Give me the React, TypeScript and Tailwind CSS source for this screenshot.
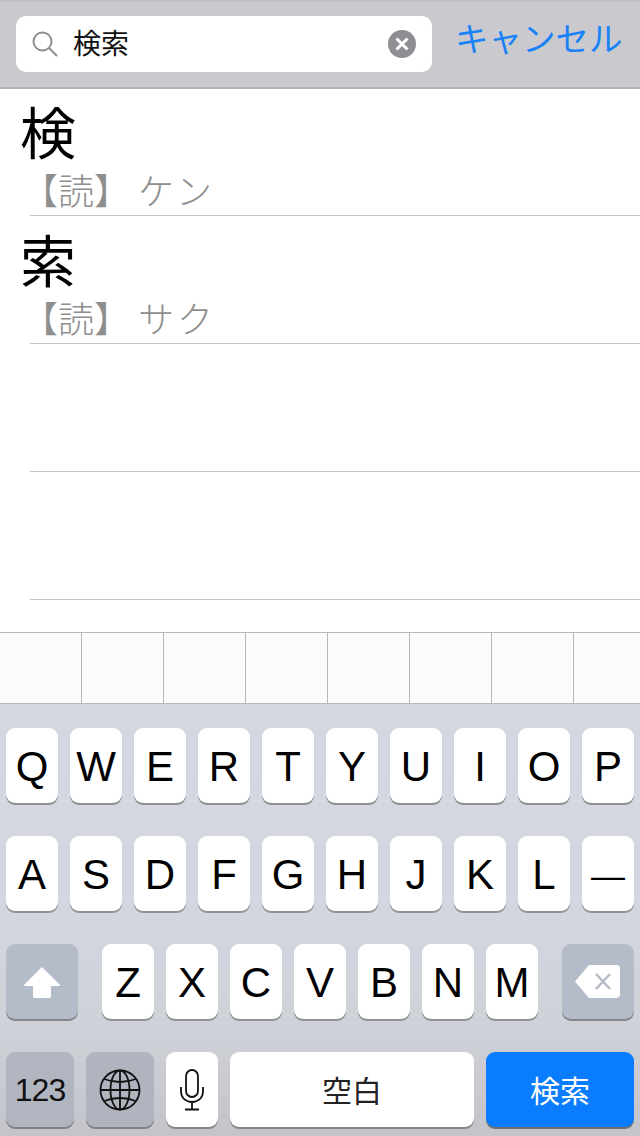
const row1 = ["Q", "W", "E", "R", "T", "Y", "U", "I", "O", "P"];
const row2 = ["A", "S", "D", "F", "G", "H", "J", "K", "L", "—"];
const row3 = ["Z", "X", "C", "V", "B", "N", "M"];

const entries = [
  { kanji: "検", reading: "ケン" },
  { kanji: "索", reading: "サク" },
  { kanji: "", reading: "" },
  { kanji: "", reading: "" },
];

const jp = "font-['Noto_Sans_CJK_JP',sans-serif]";

function Key({ label }: { label: string }) {
  return (
    <div
      className={`flex h-[75px] w-[52px] items-center justify-center rounded-[9px] bg-white pt-[3px] leading-none text-black shadow-[0_2px_0_#8e9095] ${
        label === "—" ? "text-[34px]" : "text-[42px]"
      }`}
    >
      {label}
    </div>
  );
}

function ShiftIcon() {
  return (
    <svg width="38" height="32" viewBox="0 0 38 32">
      <path d="M19 1 L37 19 Q37.500 20 36 20 L28 20 L28 30 Q28 32 26 32 L12 32 Q10 32 10 30 L10 20 L2 20 Q0.500 20 1 19 Z" fill="#fff" />
    </svg>
  );
}

function DeleteIcon() {
  return (
    <svg width="46" height="33" viewBox="0 0 46 33">
      <path d="M14 0 L41 0 Q45 0 45 4 L45 29 Q45 33 41 33 L14 33 L0 16.500 Z" fill="#fff" />
      <path d="M21 9 L35 24 M35 9 L21 24" stroke="#b4bac6" strokeWidth="2.500" fill="none" />
    </svg>
  );
}

function GlobeIcon() {
  return (
    <svg width="42" height="42" viewBox="0 0 42 42" fill="none" stroke="#111" strokeWidth="1.800">
      <circle cx="21" cy="21" r="19.500" />
      <ellipse cx="21" cy="21" rx="9.500" ry="19.500" />
      <path d="M21 1.500 V40.500 M1.500 21 H40.500" />
      <path d="M5 10 Q21 16 37 10 M5 32 Q21 26 37 32" />
    </svg>
  );
}

function MicIcon() {
  return (
    <svg width="24" height="42" viewBox="0 0 24 42" fill="none" stroke="#111" strokeWidth="1.800">
      <rect x="6" y="1" width="12" height="27" rx="6" />
      <path d="M1 18 V22 C1 29 6 33 12 33 C18 33 23 29 23 22 V18" />
      <path d="M12 33 V40 M5 40.500 H19" />
    </svg>
  );
}

export default function App() {
  return (
    <div className="flex h-[1136px] w-[640px] flex-col overflow-hidden bg-white font-['Liberation_Sans','Noto_Sans_CJK_JP',sans-serif]">
      {/* search bar */}
      <div className="flex h-[89px] shrink-0 items-start border-t-2 border-b-2 border-t-[#bdbdc2] border-b-[#b4b4b8] bg-[#c9c9ce] pt-[14px] pl-4">
        <div className="flex h-[56px] w-[416px] items-center rounded-[10px] bg-white pr-4 pl-4">
          <svg width="26" height="26" viewBox="0 0 26 26" fill="none" stroke="#8e8e93" strokeWidth="2">
            <circle cx="10.500" cy="10.500" r="9" />
            <path d="M17 17 L25 25" />
          </svg>
          <span className={`mb-1 ml-[15px] flex-1 text-[28px] leading-none text-[#111] ${jp}`}>検索</span>
          <div className="flex h-7 w-7 items-center justify-center rounded-full bg-[#8e8e93]">
            <svg width="14" height="14" viewBox="0 0 14 14" stroke="#fff" strokeWidth="3">
              <path d="M1.500 1.500 L12.500 12.500 M12.500 1.500 L1.500 12.500" />
            </svg>
          </div>
        </div>
        <span className={`mt-[1px] ml-[23px] text-[33.500px] leading-[40px] whitespace-nowrap text-[#1a82f7] ${jp}`}>キャンセル</span>
      </div>

      {/* results */}
      <div className="-mt-px flex-1">
        {entries.map((entry, i) => (
          <div key={i} className="h-[128px]">
            <div className="h-[127px] pl-5">
              <div className={`h-[76px] pt-[14px] text-[56px] leading-[56px] text-black ${jp}`}>{entry.kanji}</div>
              {entry.reading && (
                <div className={`ml-[2px] h-[50px] text-[36px] leading-[50px] font-light whitespace-pre text-[#8e8e8e] ${jp}`}>
                  【読】 <span className="tracking-[3px]">{entry.reading}</span>
                </div>
              )}
            </div>
            <div className="ml-[30px] h-px bg-[#c4c4c6]" />
          </div>
        ))}
      </div>

      {/* candidate bar */}
      <div className="flex h-[72px] shrink-0 border-t border-b border-[#b8b8ba] bg-[#fcfcfc]">
        {Array.from({ length: 8 }).map((_, i) => (
          <div key={i} className="h-full w-[82px] shrink-0 border-r border-[#b8b8ba]" />
        ))}
      </div>

      {/* keyboard */}
      <div className="flex h-[432px] shrink-0 flex-col gap-[33px] bg-[linear-gradient(180deg,#d5d8e1_0%,#d3d6df_50%,#cfd1d8_75%,#c3c4c9_100%)] px-[6px] pt-6">
        <div className="flex gap-3">
          {row1.map((k) => (
            <Key key={k} label={k} />
          ))}
        </div>
        <div className="flex gap-3">
          {row2.map((k) => (
            <Key key={k} label={k} />
          ))}
        </div>
        <div className="flex">
          <div className="mr-6 flex h-[75px] w-[72px] items-center justify-center rounded-[9px] bg-[#b5bcc9] shadow-[0_2px_0_#83868d]">
            <ShiftIcon />
          </div>
          <div className="flex gap-3">
            {row3.map((k) => (
              <Key key={k} label={k} />
            ))}
          </div>
          <div className="ml-6 flex h-[75px] w-[72px] items-center justify-center rounded-[9px] bg-[#b5bcc9] shadow-[0_2px_0_#83868d]">
            <DeleteIcon />
          </div>
        </div>
        <div className="flex gap-3">
          <div className="flex h-[75px] w-[68px] items-center justify-center rounded-[9px] bg-[#b1b5c0] text-[32px] tracking-[-1px] text-[#111] shadow-[0_2px_0_#7f8187]">
            123
          </div>
          <div className="flex h-[75px] w-[68px] items-center justify-center rounded-[9px] bg-[#b1b4bf] shadow-[0_2px_0_#7f8187]">
            <GlobeIcon />
          </div>
          <div className="flex h-[75px] w-[52px] items-center justify-center rounded-[9px] bg-white shadow-[0_2px_0_#85868a]">
            <MicIcon />
          </div>
          <div className={`flex h-[75px] w-[244px] items-center justify-center rounded-[9px] bg-white text-[30px] text-[#222] shadow-[0_2px_0_#85868a] ${jp}`}>
            空白
          </div>
          <div className={`flex h-[75px] w-[148px] items-center justify-center rounded-[9px] bg-[#0a7cff] text-[30px] text-white shadow-[0_2px_0_#6d6f74] ${jp}`}>
            検索
          </div>
        </div>
      </div>
    </div>
  );
}
